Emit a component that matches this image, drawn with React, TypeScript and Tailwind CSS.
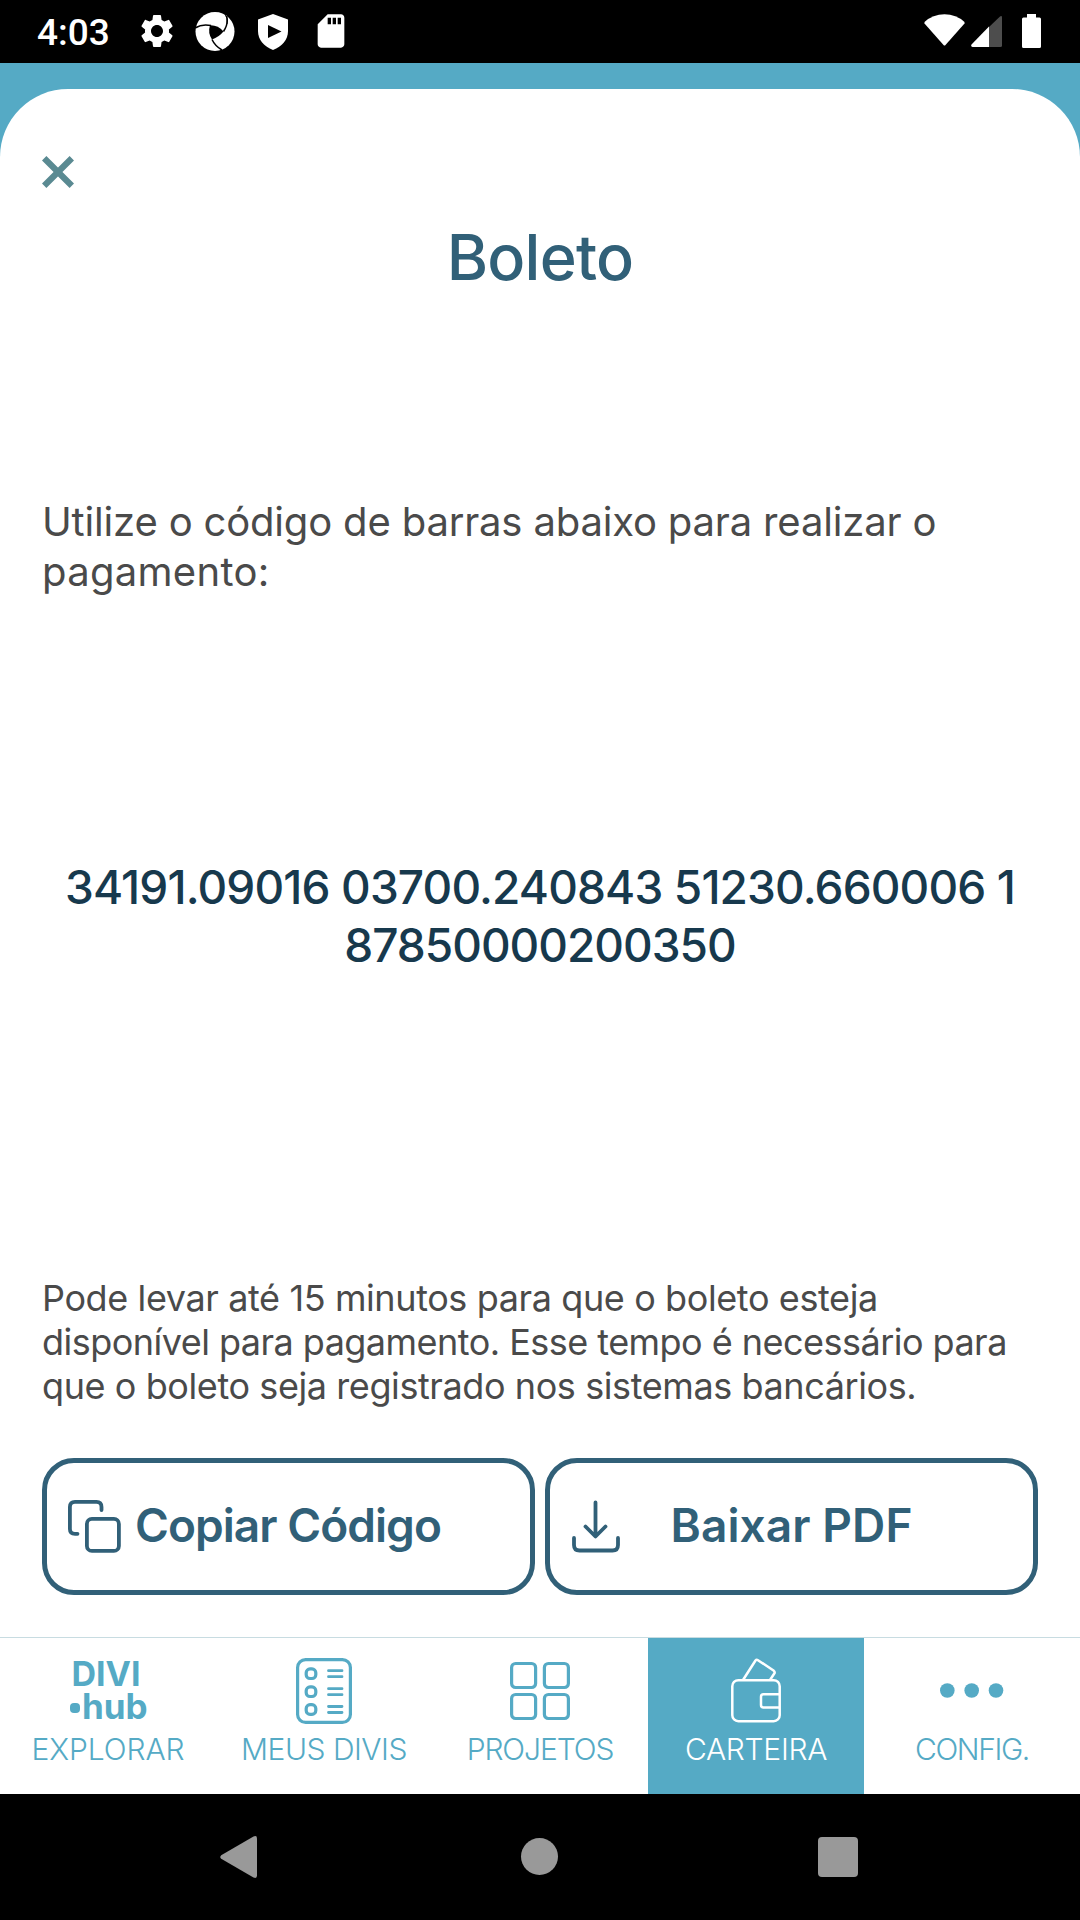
import type { ReactNode } from "react";
import { MdSdCard, MdSettings } from "react-icons/md";

function StatusBar() {
  return (
    <header className="flex h-[63px] shrink-0 items-start bg-black pt-[11px] text-white">
      <span className="ml-[37px] w-[100px] font-['Roboto',sans-serif] text-[37px] leading-[44px] font-medium">4:03</span>
      <MdSettings className="size-10" />
      <svg className="ml-[18px] size-10" viewBox="0 0 40 40">
        <circle cx="20" cy="20.5" r="19.5" fill="white" />
        <path d="M15 14.300Q23 14 28.500 20.500Q24 26 17 28.500Q12.500 22 15 14.300Z" fill="black" />
        <path d="M0 17Q7 12.500 16 14.500M28.500 20.500Q34 12 31.500 5M17 28.500Q20 35 27 39" stroke="black" strokeWidth="1.500" fill="none" />
        <path d="M30 3Q33 7 32 13" stroke="black" strokeWidth="1" fill="none" />
      </svg>
      <svg className="ml-[23px] h-[40px] w-[30px]" viewBox="0 0 30 40">
        <path d="M15 3L30 8.500V20C30 29 24 35.500 15 39C6 35.500 0 29 0 20V8.500Z" fill="white" />
        <path d="M10 14V27L23.500 20.500Z" fill="black" />
      </svg>
      <MdSdCard className="ml-[23px] size-10" />
      <div className="ml-auto mr-[39px] flex">
        <svg className="h-[40px] w-[41px]" viewBox="0 0 41 40">
          <path d="M0.500 11Q9 3.300 20.500 3.300T40.500 11V12.500L21.500 34Q20.500 35 19.500 34L0.500 12.500Z" fill="white" />
        </svg>
        <svg className="ml-[6px] h-[40px] w-[31px]" viewBox="0 0 31 40">
          <path d="M18 16L29 5.400Q31 4.300 31 6.500V34.500Q31 36 29.500 36H18Z" fill="#4d4d4d" />
          <path d="M18 15.500V36H1.500Q-0.500 35.500 0.500 33.500Z" fill="white" />
        </svg>
        <svg className="ml-[20px] h-[40px] w-[19px]" viewBox="0 0 19 40">
          <path d="M5 3H14V6.500H17.500Q19 6.500 19 8V35.500Q19 37 17.500 37H1.500Q0 37 0 35.500V8Q0 6.500 1.500 6.500H5Z" fill="white" />
        </svg>
      </div>
    </header>
  );
}

function Tab({ label, icon, active }: { label: ReactNode; icon: ReactNode; active?: boolean }) {
  return (
    <button className={`flex flex-1 flex-col items-center pt-5 ${active ? "bg-[#55aac5] text-white" : "text-[#55aac5]"}`}>
      <span className="flex h-[66px] items-center">{icon}</span>
      <span className="mt-[7px] text-[30px] leading-9 font-light whitespace-nowrap">{label}</span>
    </button>
  );
}

function ListRow({ y }: { y: number }) {
  return (
    <g>
      <rect x="10.200" y={y - 4.800} width="9.600" height="9.600" rx="3.800" />
      <path d={`M32.500 ${y - 3}H46M32.500 ${y + 3}H46`} strokeWidth="2.800" />
    </g>
  );
}

function TabBar() {
  return (
    <nav className="flex h-[157px] shrink-0 border-t border-[#c8dce1]">
      <Tab
        label={<span className="tracking-[-0.1px]">EXPLORAR</span>}
        icon={
          <span className="flex w-[76px] flex-col pb-[3px] font-bold">
            <span className="ml-[-4px] text-[34px] leading-8">DIVI</span>
            <span className="flex items-center text-[35px] leading-8">
              <i className="mt-1 mr-[2px] size-[10px] shrink-0 rounded-[4px] bg-[#55aac5]" />
              hub
            </span>
          </span>
        }
      />
      <Tab
        label={<span className="tracking-[-0.5px]">MEUS DIVIS</span>}
        icon={
          <svg className="h-[66px] w-14" viewBox="0 0 56 66" fill="none" stroke="currentColor" strokeWidth="3.200" strokeLinecap="round">
            <rect x="1.600" y="1.600" width="52.800" height="62.800" rx="8" />
            <ListRow y={15.700} />
            <ListRow y={33.700} />
            <ListRow y={51.500} />
          </svg>
        }
      />
      <Tab
        label={<span className="tracking-[-1.1px]">PROJETOS</span>}
        icon={
          <svg className="h-[66px] w-[60px]" viewBox="0 0 60 66" fill="none" stroke="currentColor" strokeWidth="3.200">
            <rect x="1.600" y="5.500" width="24" height="24" rx="4" />
            <rect x="34.400" y="5.500" width="24" height="24" rx="4" />
            <rect x="1.600" y="36.500" width="24" height="24" rx="4" />
            <rect x="34.400" y="36.500" width="24" height="24" rx="4" />
          </svg>
        }
      />
      <Tab
        active
        label={<span className="tracking-[-0.3px]">CARTEIRA</span>}
        icon={
          <svg className="h-[66px] w-[50px]" viewBox="0 0 50 66" fill="none" stroke="currentColor" strokeWidth="2.500" strokeLinejoin="round">
            <rect x="1.300" y="22.200" width="47.400" height="41" rx="6" />
            <path d="M48.700 36.200H32.500Q30 36.200 30 38.700V47Q30 49.500 32.500 49.500H48.700" />
            <path d="M12 22L24.500 2.500Q25.500 1.200 27 2.200L42.500 12.500Q44.300 14 43.300 15.500L39 22" />
          </svg>
        }
      />
      <Tab
        label={<span className="tracking-[-1.4px]">CONFIG.</span>}
        icon={
          <svg className="h-[66px] w-16" viewBox="0 0 64 66" fill="currentColor">
            <circle cx="7.300" cy="32.500" r="7.300" />
            <circle cx="31.700" cy="32.500" r="7.300" />
            <circle cx="56" cy="32.500" r="7.300" />
          </svg>
        }
      />
    </nav>
  );
}

export default function App() {
  return (
    <div className="flex h-[1920px] w-[1080px] flex-col overflow-hidden bg-white font-['Inter',sans-serif] whitespace-nowrap">
      <StatusBar />
      <div className="flex flex-1 flex-col bg-[#55aac5] pt-[26px]">
        <main className="flex flex-1 flex-col rounded-t-[68px] bg-white px-[42px]">
          <button aria-label="Fechar" className="mt-[67px] size-8">
            <svg className="size-8" viewBox="0 0 32 32" stroke="#5a8a92" strokeWidth="6.200">
              <path d="M2.200 2.200L29.800 29.800M29.800 2.200L2.200 29.800" />
            </svg>
          </button>
          <h1 className="mt-[29px] text-center text-[63px] leading-[80px] font-medium tracking-[-0.8px] text-[#316078]">Boleto</h1>
          <p className="mt-[200px] text-[40px] leading-[50px] text-[#4a4a4a]">
            <span className="block tracking-[-0.17px]">Utilize o código de barras abaixo para realizar o</span>
            <span className="block tracking-[0.3px]">pagamento:</span>
          </p>
          <p className="mt-[261px] text-center text-[46px] leading-[58px] font-medium text-[#17394d]">
            <span className="block tracking-[-0.86px]">34191.09016 03700.240843 51230.660006 1</span>
            <span className="block tracking-[-1px]">87850000200350</span>
          </p>
          <p className="mt-[302px] text-[36px] leading-[44px] text-[#4a4a4a]">
            <span className="block tracking-[-0.39px]">Pode levar até 15 minutos para que o boleto esteja</span>
            <span className="block tracking-[-0.53px]">disponível para pagamento. Esse tempo é necessário para</span>
            <span className="block tracking-[-0.41px]">que o boleto seja registrado nos sistemas bancários.</span>
          </p>
          <div className="mt-[50px] mb-[42px] flex gap-[10px] text-[46px] leading-[56px] font-semibold text-[#316078]">
            <button className="flex h-[137px] flex-1 items-center rounded-[32px] border-[5px] border-[#316078] pl-[21px]">
              <svg className="size-[53px]" viewBox="0 0 53 53" fill="none" stroke="currentColor" strokeWidth="3.800" strokeLinecap="round">
                <rect x="18.900" y="18.900" width="32" height="32" rx="5" />
                <path d="M33.500 10V7Q33.500 1.900 28.500 1.900H7Q1.900 1.900 1.900 7V29Q1.900 33.800 7 33.800H9.500" />
              </svg>
              <span className="ml-[14px] pb-[3px] tracking-[-0.95px]">Copiar Código</span>
            </button>
            <button className="flex h-[137px] flex-1 items-center rounded-[32px] border-[5px] border-[#316078] pl-[22px]">
              <svg className="h-[53px] w-12" viewBox="0 0 48 53" fill="none" stroke="currentColor" strokeWidth="3.800" strokeLinecap="round" strokeLinejoin="round">
                <path d="M23.500 2.500V36M13.500 26.500L23.500 36.500L33.500 26.500" />
                <path d="M2 38V45Q2 50.500 7.500 50.500H40.500Q46 50.500 46 45V38" />
              </svg>
              <span className="ml-[51px] pb-[3px] tracking-[0.1px]">Baixar PDF</span>
            </button>
          </div>
        </main>
      </div>
      <TabBar />
      <footer className="flex h-[126px] shrink-0 items-start bg-black pt-[42px] text-[#999]">
        <svg className="ml-[220px] h-[42px] w-[37px]" viewBox="0 0 37 42" fill="currentColor">
          <path d="M33.500 0.500Q37 -1 37 2.500V39.500Q37 43 33.500 41.500L1.200 22.800Q-0.700 21 1.200 19.200Z" />
        </svg>
        <i className="mt-[2px] ml-[264px] size-[37px] rounded-full bg-[#999]" />
        <i className="mt-[1px] ml-[260px] size-10 rounded-[4px] bg-[#999]" />
      </footer>
    </div>
  );
}
